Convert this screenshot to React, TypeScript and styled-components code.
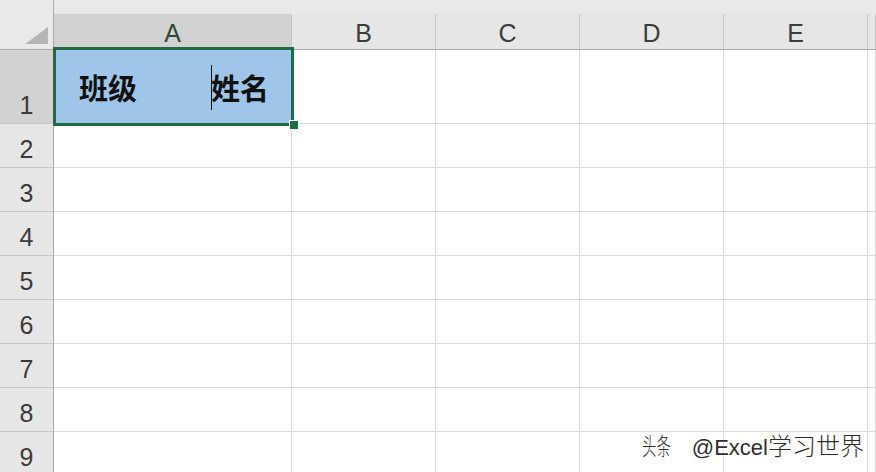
import React from "react";
import styled, { createGlobalStyle } from "styled-components";

const GlobalStyle = createGlobalStyle`
  html, body {
    margin: 0;
    padding: 0;
    background: #ffffff;
    overflow: hidden;
  }
`;

const GREEN = "#1f6b43";
const GRID = "#d9d9d9";
const HEAD_LINE = "#ababab";

const Page = styled.div`
  position: relative;
  width: 876px;
  height: 472px;
  overflow: hidden;
`;

const Sheet = styled.div`
  display: grid;
  grid-template-columns: 54px 238px 144px 144px 144px 144px 1fr;
  grid-template-rows: 14px 36px 74px repeat(8, 44px);
  background: #ffffff;
  font-family: "Liberation Sans", Arial, sans-serif;
`;

const TopStrip = styled.div`
  grid-column: 2 / -1;
  background: #e9e9e9;
`;

const Corner = styled.div`
  grid-row: 1 / span 2;
  grid-column: 1;
  background: #e9e9e9;
  border-right: 1px solid ${HEAD_LINE};
  border-bottom: 1px solid ${HEAD_LINE};
  box-sizing: border-box;
  display: flex;
  align-items: flex-end;
  justify-content: flex-end;
  padding: 0 5px 5px 0;
`;

const CornerMark = styled.svg`
  width: 23px;
  height: 17px;
  display: block;
`;

const ColHeader = styled.div<{ $selected?: boolean }>`
  box-sizing: border-box;
  background: ${p => (p.$selected ? "#d2d2d2" : "#e6e6e6")};
  border-right: 1px solid #c6c6c6;
  border-bottom: 1px solid ${p => (p.$selected ? GREEN : HEAD_LINE)};
  ${p => p.$selected && `box-shadow: inset 0 -1px 0 ${GREEN};`}
  color: ${p => (p.$selected ? "#2c4a37" : "#3c3c3c")};
  font-size: 25px;
  display: flex;
  align-items: center;
  justify-content: center;
  padding-top: 3px;
`;

const RowHeader = styled.div<{ $selected?: boolean }>`
  box-sizing: border-box;
  background: ${p => (p.$selected ? "#d2d2d2" : "#e6e6e6")};
  border-right: 1px solid ${HEAD_LINE};
  border-bottom: 1px solid #c6c6c6;
  color: #3a3a3a;
  font-size: 25px;
  display: flex;
  align-items: flex-end;
  justify-content: center;
  line-height: 1;
  padding-bottom: 5px;
`;

const Cell = styled.div`
  box-sizing: border-box;
  border-right: 1px solid ${GRID};
  border-bottom: 1px solid ${GRID};
  background: #ffffff;
`;

const ActiveCell = styled.div`
  position: relative;
  z-index: 1;
  box-sizing: border-box;
  background: #9fc5e8;
  display: flex;
  align-items: center;
  justify-content: space-between;
  padding: 0 23px 0 25px;
  font-family: "Noto Sans CJK SC", "Noto Sans", sans-serif;
  font-weight: 700;
  font-size: 29px;
  color: #111;

  &::after {
    content: "";
    position: absolute;
    top: -3px;
    left: -1px;
    right: -2px;
    bottom: -2px;
    border: 3px solid ${GREEN};
    pointer-events: none;
  }
`;

const Word = styled.span<{ $cursor?: boolean }>`
  position: relative;
  line-height: 1;
  ${p =>
    p.$cursor &&
    `
    &::before {
      content: "";
      position: absolute;
      left: 0;
      top: -8px;
      bottom: -8px;
      width: 1px;
      background: #111;
    }
  `}
`;

const FillHandle = styled.span`
  position: absolute;
  right: -7px;
  bottom: -6px;
  width: 8px;
  height: 8px;
  background: ${GREEN};
  border: 1px solid #ffffff;
  z-index: 2;
`;

const Watermark = styled.div`
  position: absolute;
  right: 12px;
  bottom: 10px;
  display: flex;
  align-items: center;
  font-size: 22px;
  color: #2e2e2e;
  text-shadow: 0 0 2px #fff, 0 0 2px #fff, 0 0 3px #fff;
  white-space: nowrap;
`;

const Brand = styled.span`
  display: inline-block;
  font-family: "Noto Sans CJK SC", sans-serif;
  font-size: 24px;
  font-weight: 300;
  width: 30px;
  margin-right: 20px;
  transform: scaleX(0.6);
  transform-origin: left center;
`;

const Handle = styled.span`
  font-family: "Liberation Sans", "Noto Sans CJK SC", sans-serif;
`;

const Cjk = styled.span`
  font-family: "Noto Sans CJK SC", sans-serif;
  font-size: 24px;
  font-weight: 300;
`;

const columns = ["A", "B", "C", "D", "E", ""];
const rows = [2, 3, 4, 5, 6, 7, 8, 9];

export default function App() {
  return (
    <>
      <GlobalStyle />
      <Page>
        <Sheet>
          <Corner>
            <CornerMark viewBox="0 0 23 17">
              <polygon points="23,0 23,17 0,17" fill="#b5b5b5" />
            </CornerMark>
          </Corner>
          <TopStrip />
          {columns.map((c, i) => (
            <ColHeader key={"h" + i} $selected={c === "A"}>
              {c}
            </ColHeader>
          ))}

          <RowHeader $selected>1</RowHeader>
          <ActiveCell>
            <Word>班级</Word>
            <Word $cursor>姓名</Word>
            <FillHandle />
          </ActiveCell>
          {columns.slice(1).map((c, i) => (
            <Cell key={"r1" + i} />
          ))}

          {rows.map(r => (
            <React.Fragment key={r}>
              <RowHeader>{r}</RowHeader>
              {columns.map((c, i) => (
                <Cell key={r + "-" + i} />
              ))}
            </React.Fragment>
          ))}
        </Sheet>
        <Watermark>
          <Brand>头条</Brand>
          <Handle>
            @Excel<Cjk>学习世界</Cjk>
          </Handle>
        </Watermark>
      </Page>
    </>
  );
}
